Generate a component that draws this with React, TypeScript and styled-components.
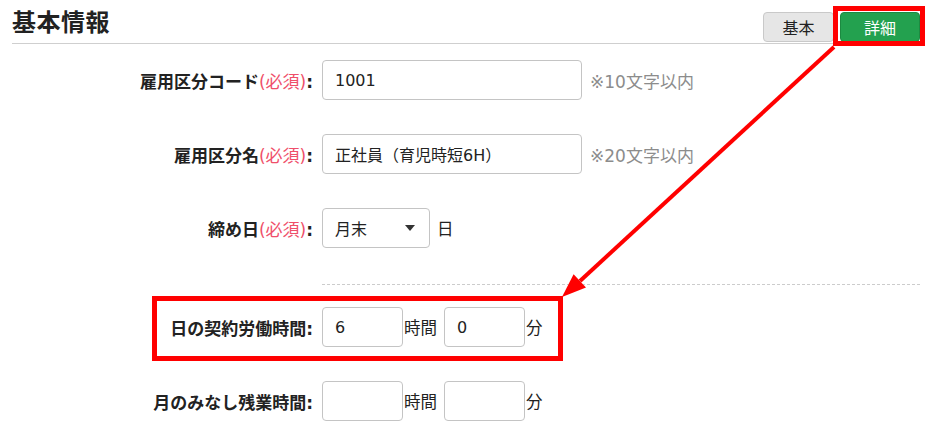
import React from "react";
import styled, { createGlobalStyle } from "styled-components";

const GlobalStyle = createGlobalStyle`
  html, body {
    margin: 0;
    padding: 0;
    background: #fff;
  }
  body {
    font-family: "DejaVu Sans", "Noto Sans CJK JP", sans-serif;
    color: #222;
  }
  * { box-sizing: border-box; }
`;

const Page = styled.div`
  position: relative;
  width: 935px;
  height: 442px;
  padding: 0 15px 0 12px;
  overflow: hidden;
`;

const Header = styled.div`
  display: flex;
  justify-content: space-between;
  align-items: flex-end;
  height: 44px;
  border-bottom: 1px solid #cfcfcf;
`;

const Title = styled.h2`
  margin: 0 0 5px;
  font-family: "Noto Sans CJK JP", sans-serif;
  font-size: 24px;
  font-weight: 700;
  line-height: 34px;
  letter-spacing: 0.5px;
`;

const Tabs = styled.div`
  display: flex;
  gap: 6px;
`;

const TabButton = styled.button<{ $active?: boolean }>`
  height: 30px;
  width: ${(p) => (p.$active ? "80px" : "71px")};
  border-radius: 4px;
  border: 1px solid ${(p) => (p.$active ? "#1c8a41" : "#c9c9c9")};
  background: ${(p) => (p.$active ? "#23a14f" : "#e6e6e6")};
  color: ${(p) => (p.$active ? "#fff" : "#222")};
  font-family: "Noto Sans CJK JP", sans-serif;
  font-size: 16px;
  line-height: 1;
  padding: 0;
  margin-bottom: 1px;
`;

const Form = styled.div`
  display: flex;
  flex-direction: column;
  padding-top: 16px;
`;

const Row = styled.div<{ $gap?: number }>`
  display: grid;
  grid-template-columns: 301px 1fr;
  column-gap: 9px;
  align-items: center;
  height: 40px;
  margin-bottom: ${(p) => p.$gap ?? 34}px;
`;

const Label = styled.div`
  text-align: right;
  font-size: 17px;
  font-weight: 700;
  white-space: nowrap;
`;

const Required = styled.span`
  color: #ef4f6a;
  font-weight: 400;
`;

const Controls = styled.div`
  display: flex;
  align-items: center;
`;

const TextInput = styled.div<{ $width: number }>`
  width: ${(p) => p.$width}px;
  height: 40px;
  border: 1px solid #c4c4c4;
  border-radius: 4px;
  padding: 0 12px;
  display: flex;
  align-items: center;
  font-size: 16px;
  color: #222;
  background: #fff;
`;

const Hint = styled.span`
  margin-left: 8px;
  font-size: 17px;
  color: #8c8c8c;
`;

const Unit = styled.span<{ $before?: number; $after?: number }>`
  font-size: 16.5px;
  margin-left: ${(p) => p.$before ?? 1}px;
  margin-right: ${(p) => p.$after ?? 0}px;
`;

const Select = styled.div`
  width: 108px;
  height: 40px;
  border: 1px solid #c4c4c4;
  border-radius: 4px;
  padding: 0 12px;
  display: flex;
  align-items: center;
  justify-content: space-between;
  font-size: 16px;
  background: #fff;
`;

const Caret = styled.span`
  width: 0;
  height: 0;
  border-left: 5px solid transparent;
  border-right: 5px solid transparent;
  border-top: 6px solid #333;
  margin-right: 2px;
`;

const Divider = styled.div`
  margin: 0 0 22px 310px;
  border-top: 1px dashed #cccccc;
`;

const Annotation = styled.svg`
  position: absolute;
  left: 0;
  top: 0;
  pointer-events: none;
`;

export default function App() {
  return (
    <>
      <GlobalStyle />
      <Page>
        <Header>
          <Title>基本情報</Title>
          <Tabs>
            <TabButton>基本</TabButton>
            <TabButton $active>詳細</TabButton>
          </Tabs>
        </Header>

        <Form>
          <Row>
            <Label>
              雇用区分コード<Required>(必須)</Required>:
            </Label>
            <Controls>
              <TextInput $width={260}>1001</TextInput>
              <Hint>※10文字以内</Hint>
            </Controls>
          </Row>

          <Row>
            <Label>
              雇用区分名<Required>(必須)</Required>:
            </Label>
            <Controls>
              <TextInput $width={260}>正社員（育児時短6H）</TextInput>
              <Hint>※20文字以内</Hint>
            </Controls>
          </Row>

          <Row $gap={36}>
            <Label>
              締め日<Required>(必須)</Required>:
            </Label>
            <Controls>
              <Select>
                月末
                <Caret />
              </Select>
              <Unit $before={7}>日</Unit>
            </Controls>
          </Row>

          <Divider />

          <Row>
            <Label>日の契約労働時間:</Label>
            <Controls>
              <TextInput $width={81}>6</TextInput>
              <Unit $after={7}>時間</Unit>
              <TextInput $width={81}>0</TextInput>
              <Unit>分</Unit>
            </Controls>
          </Row>

          <Row>
            <Label>月のみなし残業時間:</Label>
            <Controls>
              <TextInput $width={81} />
              <Unit $after={7}>時間</Unit>
              <TextInput $width={81} />
              <Unit>分</Unit>
            </Controls>
          </Row>
        </Form>

        <Annotation width="935" height="442" viewBox="0 0 935 442">
          <rect x="835.5" y="8.5" width="87" height="35" fill="none" stroke="#ff0000" strokeWidth="5" />
          <rect x="154.5" y="298.5" width="406" height="60" fill="none" stroke="#ff0000" strokeWidth="5" />
          <line x1="834" y1="47" x2="580" y2="281" stroke="#ff0000" strokeWidth="4" />
          <polygon points="562,297 586,287.4 573.6,274.2" fill="#ff0000" />
        </Annotation>
      </Page>
    </>
  );
}
